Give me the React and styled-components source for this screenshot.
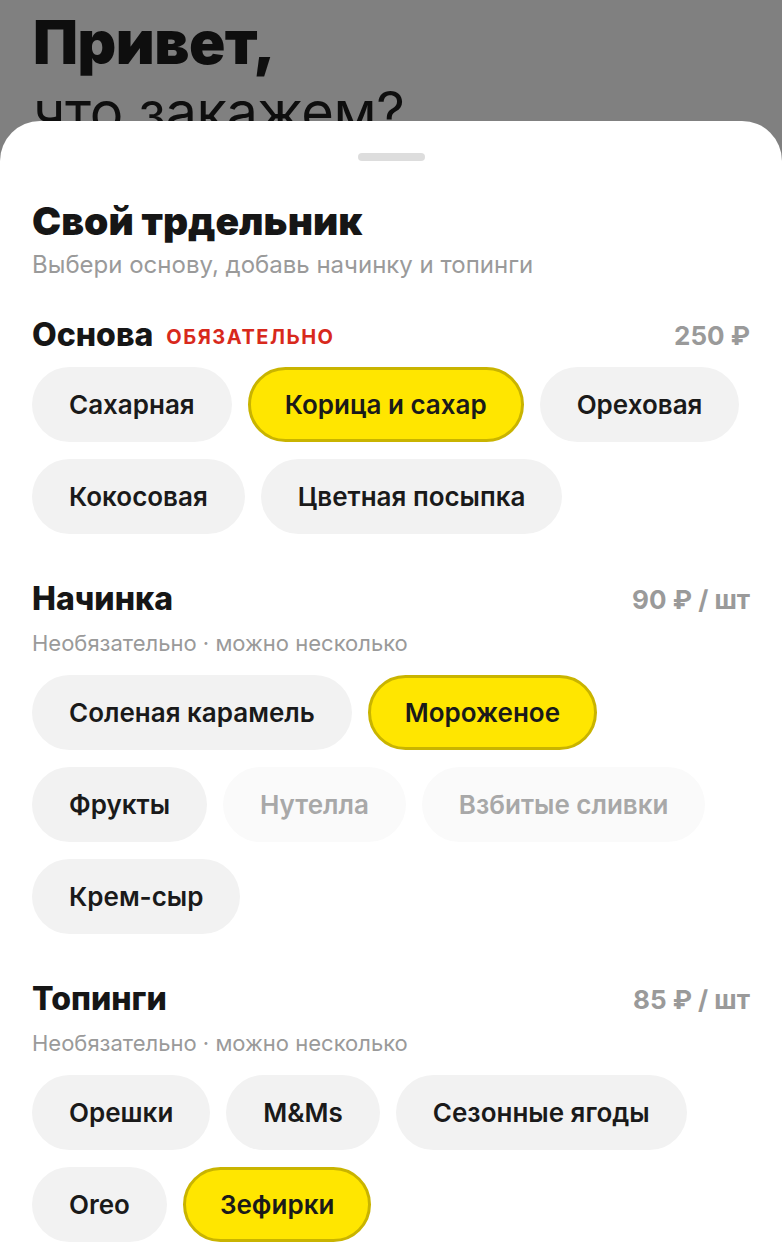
import React from 'react'
import styled, { createGlobalStyle } from 'styled-components'

const GlobalStyle = createGlobalStyle`
  html, body {
    margin: 0;
    padding: 0;
    background: #808080;
  }
  body {
    font-family: Inter, "Noto Sans", sans-serif;
    -webkit-font-smoothing: antialiased;
  }
`

const Screen = styled.div`
  width: 782px;
  min-height: 1256px;
  background: #808080;
  display: flex;
  flex-direction: column;
`

// page behind the sheet, dimmed and partly covered
const Greeting = styled.div`
  height: 121px;
  overflow: hidden;
  padding: 10px 33px 0;
  box-sizing: border-box;
  color: #0e0e0e;
  line-height: 64px;
`

const Hello = styled.div`
  font-size: 60px;
  font-weight: 900;
  letter-spacing: -0.5px;
`

const Ask = styled.div`
  margin-top: 6px;
  font-size: 56px;
  font-weight: 400;
  letter-spacing: -0.4px;
`

const Sheet = styled.div`
  flex: 1;
  background: #fff;
  border-radius: 40px 40px 0 0;
  padding: 32px 32px 40px;
  display: flex;
  flex-direction: column;
`

const Grabber = styled.div`
  align-self: center;
  width: 67px;
  height: 8px;
  border-radius: 4px;
  background: #dddddd;
  margin-bottom: 38px;
`

const Title = styled.h1`
  margin: 0;
  font-size: 39px;
  line-height: 44px;
  font-weight: 900;
  color: #161616;
`

const Subtitle = styled.p`
  margin: 8px 0 0;
  font-size: 24px;
  line-height: 28px;
  color: #9a9a9a;
`

const Section = styled.section`
  margin-top: ${(p) => (p.first ? '39px' : '48px')};
`

const Head = styled.div`
  display: flex;
  align-items: center;
  height: 34px;
  gap: 13px;
  margin-bottom: 15px;
`

const SectionName = styled.h2`
  margin: 0;
  font-size: 32px;
  line-height: 34px;
  font-weight: 800;
  color: #161616;
`

const Required = styled.span`
  font-size: 20px;
  font-weight: 700;
  letter-spacing: 1.5px;
  color: #d8291c;
  text-transform: uppercase;
  padding-top: 3px;
`

const Price = styled.span`
  margin-left: auto;
  font-size: 26px;
  font-weight: 700;
  color: #9a9a9a;
`

const Note = styled.div`
  margin: 4px 0 20px;
  font-size: 22px;
  line-height: 24px;
  color: #9a9a9a;
`

const Chips = styled.div`
  display: flex;
  flex-wrap: wrap;
  column-gap: 16px;
  row-gap: 17px;
`

const Chip = styled.button`
  font-family: Inter, "Noto Sans", sans-serif;
  font-size: 26px;
  line-height: 29px;
  font-weight: 600;
  padding: 20px 34px;
  border-radius: 999px;
  border: 3px solid ${(p) => (p.selected ? '#c9b400' : 'transparent')};
  background: ${(p) => (p.selected ? '#ffe600' : p.disabled ? '#fafafa' : '#f2f2f2')};
  color: ${(p) => (p.disabled ? '#a8a8a8' : '#1a1a1a')};
  cursor: ${(p) => (p.disabled ? 'default' : 'pointer')};
`

const groups = [
  {
    name: 'Основа',
    required: true,
    price: '250 ₽',
    items: [
      { label: 'Сахарная' },
      { label: 'Корица и сахар', selected: true },
      { label: 'Ореховая' },
      { label: 'Кокосовая' },
      { label: 'Цветная посыпка' },
    ],
  },
  {
    name: 'Начинка',
    price: '90 ₽ / шт',
    note: 'Необязательно · можно несколько',
    items: [
      { label: 'Соленая карамель' },
      { label: 'Мороженое', selected: true },
      { label: 'Фрукты' },
      { label: 'Нутелла', disabled: true },
      { label: 'Взбитые сливки', disabled: true },
      { label: 'Крем-сыр' },
    ],
  },
  {
    name: 'Топинги',
    price: '85 ₽ / шт',
    note: 'Необязательно · можно несколько',
    items: [
      { label: 'Орешки' },
      { label: 'M&Ms' },
      { label: 'Сезонные ягоды' },
      { label: 'Oreo' },
      { label: 'Зефирки', selected: true },
    ],
  },
]

const App = () => {
  return (
    <Screen>
      <GlobalStyle />
      <Greeting>
        <Hello>Привет,</Hello>
        <Ask>что закажем?</Ask>
      </Greeting>
      <Sheet>
        <Grabber />
        <Title>Свой трдельник</Title>
        <Subtitle>Выбери основу, добавь начинку и топинги</Subtitle>
        {groups.map((g, i) => (
          <Section key={g.name} first={i === 0}>
            <Head>
              <SectionName>{g.name}</SectionName>
              {g.required && <Required>Обязательно</Required>}
              <Price>{g.price}</Price>
            </Head>
            {g.note && <Note>{g.note}</Note>}
            <Chips>
              {g.items.map((it) => (
                <Chip key={it.label} selected={it.selected} disabled={it.disabled}>
                  {it.label}
                </Chip>
              ))}
            </Chips>
          </Section>
        ))}
      </Sheet>
    </Screen>
  )
}

export default App
